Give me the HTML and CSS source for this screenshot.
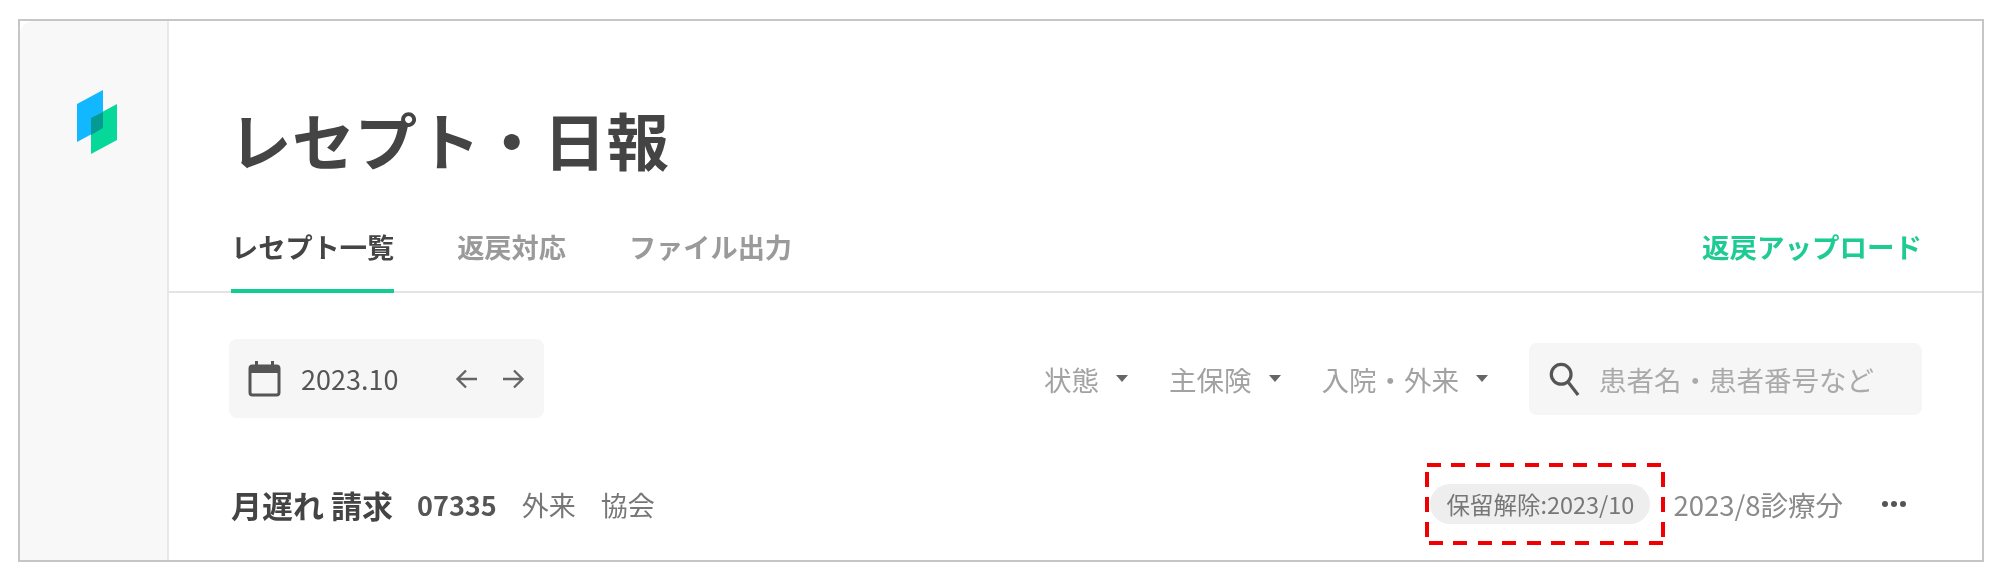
FILE: index.html
```html
<!DOCTYPE html>
<html lang="ja">
<head>
<meta charset="utf-8">
<title>レセプト・日報</title>
<link rel="stylesheet" href="styles.css">
</head>
<body>
<div class="frame">
  <aside class="sidebar">
    <svg class="logo" width="42" height="66" viewBox="0 0 42 66">
      <polygon points="0,14 26,0 26,38 0,52" fill="#12b8ff"/>
      <polygon points="14,28 40,14 40,50 14,64" fill="#06d89a"/>
      <polygon points="14,28 26,22 26,38 14,45" fill="#069a94"/>
    </svg>
  </aside>
  <main class="main">
    <h1 class="title">レセプト・日報</h1>
    <nav class="tabs">
      <a class="tab active">レセプト一覧</a>
      <a class="tab">返戻対応</a>
      <a class="tab">ファイル出力</a>
      <a class="upload">返戻アップロード</a>
    </nav>
    <div class="toolbar">
      <div class="datebox">
        <svg class="cal" width="34" height="38" viewBox="0 0 34 38" fill="none">
          <rect x="2" y="6" width="29" height="29" rx="2.5" stroke="#555" stroke-width="3"/>
          <rect x="2" y="6" width="29" height="7" fill="#555"/>
          <rect x="7" y="1" width="3" height="6" fill="#555"/>
          <rect x="23" y="1" width="3" height="6" fill="#555"/>
        </svg>
        <span class="date">2023.10</span>
        <svg class="arrow first" width="24" height="24" viewBox="0 0 24 24" fill="none" stroke="#666" stroke-width="2.400"><path d="M22 12H3M11 3.500 2.500 12l8.500 8.500"/></svg>
        <svg class="arrow" width="24" height="24" viewBox="0 0 24 24" fill="none" stroke="#666" stroke-width="2.400"><path d="M2 12h19M13 3.500 21.500 12 13 20.500"/></svg>
      </div>
      <div class="filters">
        <span class="filter">状態<i class="caret"></i></span>
        <span class="filter">主保険<i class="caret"></i></span>
        <span class="filter">入院・外来<i class="caret"></i></span>
        <div class="search">
          <svg width="32" height="36" viewBox="0 0 34 38" fill="none" stroke="#555" stroke-width="3.400"><circle cx="14" cy="14" r="10.500"/><path d="m22 23 10 13"/></svg>
          <span class="placeholder">患者名・患者番号など</span>
        </div>
      </div>
    </div>
    <div class="row">
      <strong class="claim">月遅れ 請求</strong>
      <b class="num">07335</b>
      <span class="meta">外来</span>
      <span class="meta">協会</span>
      <div class="row-right">
        <div class="mark"><span class="pill">保留解除:2023/10</span></div>
        <span class="meta served">2023/8診療分</span>
        <svg class="dots" width="26" height="8" viewBox="0 0 26 8" fill="#555"><circle cx="4" cy="4" r="3"/><circle cx="13" cy="4" r="3"/><circle cx="22" cy="4" r="3"/></svg>
      </div>
    </div>
  </main>
</div>
</body>
</html>
```
FILE: styles.css
```css
* { box-sizing: border-box; }
html, body { margin: 0; height: 100%; background: #fff; }
body {
  padding: 19px 16px 0 18px;
  font-family: "Noto Sans CJK JP", "Noto Sans", sans-serif;
  color: #444;
  overflow: hidden;
}
.frame {
  display: flex;
  width: 1966px;
  height: 543px;
  border: 2px solid #c6c6c6;
  overflow: hidden;
  filter: blur(0.7px);
}
.sidebar {
  flex: none;
  width: 149px;
  padding: 69px 0 0 57px;
  background: #f8f8f8;
  border-right: 2px solid #e8e8e8;
  border-top-left-radius: 14px;
}
.logo { display: block; }
.main { flex: 1; min-width: 0; }
.title {
  margin: 0;
  padding: 68px 0 0 60px;
  height: 171px;
  font-size: 62.5px;
  letter-spacing: 0.4px;
  line-height: 100px;
  font-weight: 700;
  color: #444;
}
.tabs {
  display: flex;
  align-items: flex-start;
  height: 101px;
  padding: 0 60px 0 62px;
  border-bottom: 2px solid #e4e4e4;
}
.tab {
  height: 101px;
  margin-right: 63px;
  padding-top: 32px;
  font-size: 27.2px;
  line-height: 44px;
  font-weight: 700;
  color: #9a9a9a;
}
.tab.active { color: #444; border-bottom: 4px solid #12cd91; }
.upload {
  margin-left: auto;
  padding-top: 32px;
  font-size: 27.5px;
  line-height: 44px;
  font-weight: 700;
  color: #1ecb92;
}
.toolbar {
  display: flex;
  justify-content: space-between;
  align-items: center;
  padding: 46px 60px 0 60px;
}
.datebox {
  display: flex;
  align-items: center;
  width: 315px;
  height: 79px;
  padding-left: 19px;
  background: #f6f6f6;
  border-radius: 8px;
}
.date {
  margin-left: 19px;
  font-size: 27px;
  color: #555;
}
.arrow { margin-left: 22px; }
.arrow.first { margin-left: 57px; }
.filters { display: flex; align-items: center; }
.filter {
  display: flex;
  align-items: center;
  margin-right: 41px;
  font-size: 27.5px;
  color: #a2a2a2;
}
.caret {
  width: 0;
  height: 0;
  margin-left: 17px;
  border-left: 6px solid transparent;
  border-right: 6px solid transparent;
  border-top: 7px solid #666;
}
.search {
  display: flex;
  align-items: center;
  gap: 19px;
  width: 393px;
  height: 72px;
  padding-left: 19px;
  background: #f6f6f6;
  border-radius: 8px;
}
.placeholder { font-size: 27.5px; color: #aaa; }
.row {
  display: flex;
  align-items: center;
  height: 82px;
  margin-top: 45px;
  padding: 0 75px 0 62px;
}
.claim { font-size: 31px; font-weight: 700; color: #444; }
.num { margin-left: 24px; font-size: 27px; font-weight: 700; color: #555; }
.meta { margin-left: 25px; font-size: 27px; color: #777; }
.row-right { display: flex; align-items: center; margin-left: auto; }
.mark {
  display: flex;
  align-items: center;
  width: 240px;
  height: 82px;
  padding-left: 5px;
  background:
    repeating-linear-gradient(90deg, transparent 0 2px, #f00000 2px 16px, transparent 16px 24.4px) top / 100% 4px no-repeat,
    repeating-linear-gradient(90deg, transparent 0 4px, #f00000 4px 18px, transparent 18px 24.4px) bottom / 100% 4px no-repeat,
    repeating-linear-gradient(180deg, transparent 0 9px, #f00000 9px 24px, transparent 24px 25px) left / 4px 100% no-repeat,
    repeating-linear-gradient(180deg, transparent 0 9px, #f00000 9px 24px, transparent 24px 25px) right / 4px 100% no-repeat;
}
.pill {
  height: 40px;
  padding: 0 16px;
  border-radius: 20px;
  background: #eee;
  font-size: 23.5px;
  line-height: 40px;
  color: #777;
  white-space: nowrap;
}
.served { margin-left: 8px; font-size: 27.5px; color: #8a8a8a; }
.dots { margin-left: 38px; }
```
